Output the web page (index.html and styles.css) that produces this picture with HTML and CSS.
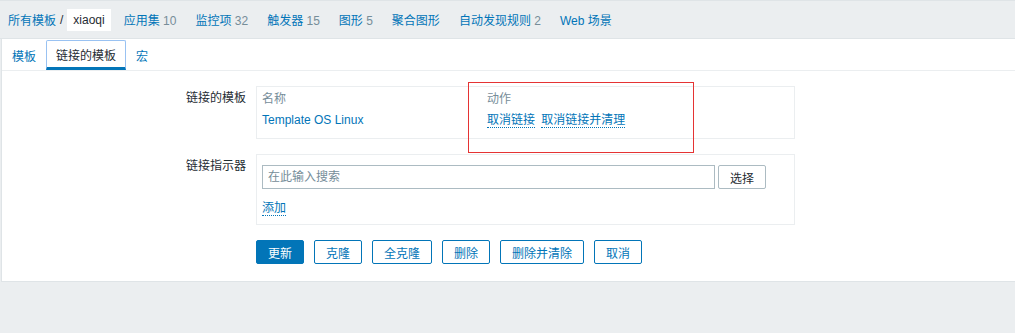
FILE: index.html
```html
<!DOCTYPE html>
<html>
<head>
    <meta charset="utf-8">
    <title>链接的模板</title>
    <link rel="stylesheet" href="styles.css">
</head>
<body>
    <!-- Barra de navegación superior -->
    <div class="header-nav">
        <a href="#" class="crumb">所有模板</a>
        <span class="slash">/</span>
        <span class="current">xiaoqi</span>
        <a href="#" class="nav-item">应用集 <span class="count">10</span></a>
        <a href="#" class="nav-item">监控项 <span class="count">32</span></a>
        <a href="#" class="nav-item">触发器 <span class="count">15</span></a>
        <a href="#" class="nav-item">图形 <span class="count">5</span></a>
        <a href="#" class="nav-item">聚合图形</a>
        <a href="#" class="nav-item">自动发现规则 <span class="count">2</span></a>
        <a href="#" class="nav-item">Web 场景</a>
    </div>

    <div class="container">
        <div class="tabs">
            <a href="#" class="tab">模板</a>
            <a href="#" class="tab active">链接的模板</a>
            <a href="#" class="tab">宏</a>
        </div>

        <div class="form">
            <div class="label">链接的模板</div>
            <div class="field-box linked">
                <div class="th">名称</div>
                <div class="th">动作</div>
                <a href="#" class="link">Template OS Linux</a>
                <div class="actions">
                    <a href="#" class="link dotted">取消链接</a>
                    <a href="#" class="link dotted">取消链接并清理</a>
                </div>
            </div>

            <div class="label">链接指示器</div>
            <div class="field-box">
                <div class="search-row">
                    <input type="text" class="search" placeholder="在此输入搜索">
                    <button class="btn-grey">选择</button>
                </div>
                <a href="#" class="link dotted add">添加</a>
            </div>

            <div></div>
            <div class="buttons">
                <button class="btn primary">更新</button>
                <button class="btn">克隆</button>
                <button class="btn">全克隆</button>
                <button class="btn">删除</button>
                <button class="btn">删除并清除</button>
                <button class="btn">取消</button>
            </div>
        </div>

        <!-- Marca roja sobre la columna de acciones -->
        <div class="highlight"></div>
    </div>
</body>
</html>
```

FILE: styles.css
```css
body {
    font-family: "Liberation Sans", "Noto Sans CJK SC", sans-serif;
    font-size: 12px;
    margin: 0;
    padding: 0;
    background-color: #ebeef0;
    color: #1f2c33;
}

a {
    text-decoration: none;
}

/* Barra superior */
.header-nav {
    display: flex;
    align-items: center;
    height: 37px;
    padding-left: 8px;
    border-top: 1px solid #dfe4e7;
    border-bottom: 1px solid #dfe4e7;
}

.header-nav .crumb {
    color: #0275b8;
}

.header-nav .slash {
    color: #1f2c33;
    margin: 0 4px;
}

.header-nav .current {
    background-color: #fff;
    padding: 4px 6px;
    line-height: 14px;
    color: #1f2c33;
    margin-right: 13px;
}

.nav-item {
    color: #0275b8;
    margin-right: 19px;
}

.nav-item .count {
    color: #768d99;
}

/* Contenedor blanco */
.container {
    position: relative;
    background-color: #fff;
    margin-left: 1px;
    border-left: 1px solid #dfe4e7;
    border-bottom: 1px solid #dfe4e7;
}

.tabs {
    display: flex;
    height: 30px;
    padding-top: 1px;
    border-bottom: 1px solid #ebeef0;
}

.tab {
    display: flex;
    align-items: center;
    padding: 0 10px;
    color: #0275b8;
}

.tab.active {
    padding: 0 9px;
    color: #1f2c33;
    border: 1px solid #99c2f2;
    border-bottom: 3px solid #0275b8;
    border-radius: 2px 2px 0 0;
}

/* Formulario */
.form {
    display: grid;
    grid-template-columns: 244px 539px;
    column-gap: 10px;
    row-gap: 15px;
    padding: 15px 0 17px 0;
}

.label {
    text-align: right;
    padding-top: 5px;
    line-height: 14px;
}

.field-box {
    border: 1px solid #ebeef0;
    padding: 5px 5px 8px 5px;
}

.linked {
    display: grid;
    grid-template-columns: 225px auto;
    row-gap: 7px;
    padding-bottom: 11px;
    line-height: 14px;
}

.th {
    color: #768d99;
}

.link {
    color: #0275b8;
}

.link.dotted {
    border-bottom: 1px dotted #0275b8;
}

.actions a {
    margin-right: 3px;
}

.search-row {
    display: flex;
    gap: 3px;
    margin-top: 5px;
}

.search {
    width: 453px;
    height: 24px;
    box-sizing: border-box;
    border: 1px solid #acbbc2;
    padding: 0 5px;
    font-family: inherit;
    font-size: 12px;
    color: #1f2c33;
}

.search::placeholder {
    color: #768d99;
}

.btn-grey {
    height: 24px;
    padding: 0 11px;
    background-color: #fff;
    border: 1px solid #acbbc2;
    border-radius: 2px;
    font-family: inherit;
    font-size: 12px;
    color: #1f2c33;
}

.add {
    display: inline-block;
    margin-top: 12px;
    line-height: 14px;
}

.buttons {
    display: flex;
    gap: 10px;
}

.btn {
    height: 24px;
    padding: 0 11px;
    background-color: #fff;
    border: 1px solid #0275b8;
    border-radius: 2px;
    color: #0275b8;
    font-family: inherit;
    font-size: 12px;
}

.btn.primary {
    background-color: #0275b8;
    color: #fff;
}

/* Rectángulo rojo de anotación */
.highlight {
    position: absolute;
    left: 466px;
    top: 43px;
    width: 224px;
    height: 69px;
    border: 1px solid #e53333;
}
```
